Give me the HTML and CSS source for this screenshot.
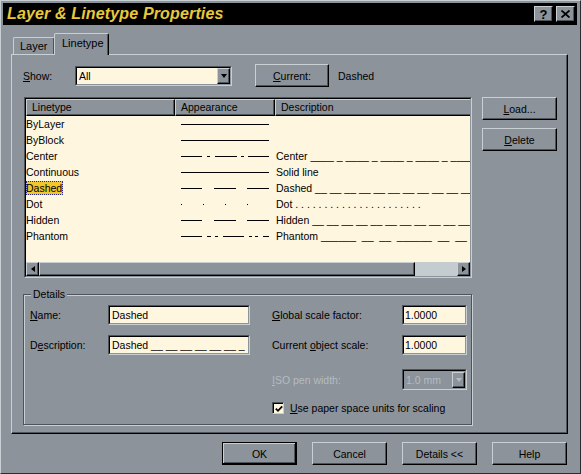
FILE: index.html
```html
<!DOCTYPE html>
<html>
<head>
<meta charset="utf-8">
<title>Layer &amp; Linetype Properties</title>
<link rel="stylesheet" href="styles.css">
</head>
<body>
<div class="window">
  <div class="titlebar">
    <span class="title">Layer &amp; Linetype Properties</span>
    <div class="tbtns">
      <span class="tbtn">?</span>
      <span class="tbtn"><svg width="9" height="8" viewBox="0 0 9 8"><path d="M0.5 0.5 L8.5 7.5 M8.5 0.5 L0.5 7.5" stroke="#000" stroke-width="1.8" fill="none"/></svg></span>
    </div>
  </div>

  <div class="tabs">
    <span class="tab">Layer</span>
    <span class="tab active">Linetype</span>
  </div>

  <div class="panel">
    <div class="showrow">
      <span class="show-lbl"><u>S</u>how:</span>
      <div class="sunken combo">
        <div class="sunken-in combo-in">
          <span class="combo-val">All</span>
          <span class="combo-btn"><i class="tri-down"></i></span>
        </div>
      </div>
      <button class="btn current"><u>C</u>urrent:</button>
      <span class="curval">Dashed</span>
    </div>

    <div class="listrow">
      <div class="sunken list">
        <div class="sunken-in list-in">
          <div class="lhead">
            <span class="hc c1">Linetype</span>
            <span class="hc c2">Appearance</span>
            <span class="hc c3">Description</span>
          </div>
          <div class="lbody">
            <div class="lrow"><span class="c1">ByLayer</span><span class="c2"><svg class="ln" width="88" height="16"><path d="M0 8.5H88"/></svg></span><span class="c3"></span></div>
            <div class="lrow"><span class="c1">ByBlock</span><span class="c2"><svg class="ln" width="88" height="16"><path d="M0 8.5H88"/></svg></span><span class="c3"></span></div>
            <div class="lrow"><span class="c1">Center</span><span class="c2"><svg class="ln" width="88" height="16"><path d="M0 8.5H21M26 8.5H29M34 8.5H56M60 8.5H63M67 8.5H88"/></svg></span><span class="c3">Center ____ _ ____ _ ____ _ ____ _ ____ _ ____</span></div>
            <div class="lrow"><span class="c1">Continuous</span><span class="c2"><svg class="ln" width="88" height="16"><path d="M0 8.5H88"/></svg></span><span class="c3">Solid line</span></div>
            <div class="lrow"><span class="c1"><span class="sel">Dashed</span></span><span class="c2"><svg class="ln" width="88" height="16"><path d="M0 8.5H21M33 8.5H55M66 8.5H88"/></svg></span><span class="c3">Dashed __ __ __ __ __ __ __ __ __ __ __ __ __ _</span></div>
            <div class="lrow"><span class="c1">Dot</span><span class="c2"><svg class="ln" width="88" height="16"><path d="M0 8.5H1M22 8.5H23M44 8.5H45M66 8.5H67"/></svg></span><span class="c3">Dot . . . . . . . . . . . . . . . . . . . . . .</span></div>
            <div class="lrow"><span class="c1">Hidden</span><span class="c2"><svg class="ln" width="88" height="16"><path d="M0 8.5H21M33 8.5H55M66 8.5H88"/></svg></span><span class="c3">Hidden __ __ __ __ __ __ __ __ __ __ __ __ __ __</span></div>
            <div class="lrow"><span class="c1">Phantom</span><span class="c2"><svg class="ln" width="88" height="16"><path d="M0 8.5H21M26 8.5H30M34 8.5H37M42 8.5H63M68 8.5H71M74 8.5H77M82 8.5H88"/></svg></span><span class="c3">Phantom ______  __  __  ______  __  __  ______</span></div>
          </div>
          <div class="hscroll">
            <span class="sbtn"><i class="tri-left"></i></span>
            <span class="sthumb"></span>
            <span class="strack"></span>
            <span class="sbtn"><i class="tri-right"></i></span>
          </div>
        </div>
      </div>
      <div class="sidebtns">
        <button class="btn"><u>L</u>oad...</button>
        <button class="btn"><u>D</u>elete</button>
      </div>
    </div>

    <div class="details">
      <span class="legend">Details</span>
      <div class="drow r1">
        <span class="dl1"><u>N</u>ame:</span>
        <div class="sunken field wide"><div class="sunken-in field-in">Dashed</div></div>
        <span class="dl2"><u>G</u>lobal scale factor:</span>
        <div class="sunken field narrow"><div class="sunken-in field-in">1.0000</div></div>
      </div>
      <div class="drow r2">
        <span class="dl1">D<u>e</u>scription:</span>
        <div class="sunken field wide"><div class="sunken-in field-in">Dashed __ __ __ __ __ __ _</div></div>
        <span class="dl2">Current <u>o</u>bject scale:</span>
        <div class="sunken field narrow"><div class="sunken-in field-in">1.0000</div></div>
      </div>
      <div class="drow r3">
        <span class="spacer"></span>
        <span class="dl2 disabled"><u>I</u>SO pen width:</span>
        <div class="sunken field narrow dis"><div class="sunken-in field-in dis-in"><span class="dis-val">1.0 mm</span><span class="combo-btn"><i class="tri-down grey"></i></span></div></div>
      </div>
      <div class="drow r4">
        <span class="spacer"></span>
        <span class="checkbox"><svg width="8" height="8" viewBox="0 0 8 8"><path d="M0.8 3.6 L3 5.8 L7.2 1.4" stroke="#000" stroke-width="1.8" fill="none"/></svg></span>
        <span class="cblabel"><u>U</u>se paper space units for scaling</span>
      </div>
    </div>
  </div>

  <div class="bottom">
    <button class="btn default">OK</button>
    <button class="btn">Cancel</button>
    <button class="btn">Details &lt;&lt;</button>
    <button class="btn">Help</button>
  </div>
</div>
</body>
</html>
```

FILE: styles.css
```css
* { box-sizing: border-box; }

body {
  margin: 0;
  background: #8c939a;
  font-family: "Liberation Sans", Arial, sans-serif;
  font-size: 10.5px;
  color: #000;
}

.window {
  width: 581px;
  height: 474px;
  border: 1px solid;
  border-color: #c8d0d4 #2a2e32 #2a2e32 #c8d0d4;
  padding: 2px 3px 0 2px;
  background: #8c939a;
}

/* title bar */
.titlebar {
  height: 22px;
  background: #000;
  display: flex;
  align-items: center;
  justify-content: space-between;
  padding-left: 4px;
}
.title {
  color: #e9c83a;
  font-family: "Liberation Sans", Arial, sans-serif;
  font-weight: bold;
  font-style: italic;
  font-size: 16px;
  letter-spacing: 0.15px;
}
.tbtns {
  display: flex;
  gap: 3px;
  margin-right: 2px;
}
.tbtn {
  width: 19px;
  height: 16px;
  background: #8c939a;
  border: 1px solid;
  border-color: #c8d0d4 #000 #000 #c8d0d4;
  box-shadow: inset -1px -1px 0 #4e5459;
  display: flex;
  align-items: center;
  justify-content: center;
  font-weight: bold;
  font-size: 13px;
  line-height: 1;
}

/* tabs */
.tabs {
  display: flex;
  align-items: flex-end;
  height: 29px;
  padding-left: 10px;
  position: relative;
  z-index: 1;
}
.tab {
  height: 17px;
  width: 42px;
  padding-left: 6px;
  padding-top: 2px;
  border: 1px solid;
  border-bottom: none;
  border-color: #c8d0d4 #000 #000 #c8d0d4;
  border-radius: 2px 2px 0 0;
  box-shadow: inset -1px 0 0 #4e5459;
  font-size: 11px;
}
.tab.active {
  width: 55px;
  height: 22px;
  margin-left: -1px;
  margin-bottom: -1px;
  padding-left: 7px;
  padding-top: 3px;
  background: #8c939a;
}

/* panel */
.panel {
  margin-left: 8px;
  width: 557px;
  height: 380px;
  border: 1px solid;
  border-color: #c8d0d4 #000 #000 #c8d0d4;
  box-shadow: inset -1px -1px 0 #4e5459;
}

.showrow {
  display: flex;
  align-items: center;
  height: 23px;
  margin-top: 9px;
  padding-left: 11px;
}
.show-lbl { width: 52px; }

.sunken {
  border: 1px solid;
  border-color: #4e5459 #c8d0d4 #c8d0d4 #4e5459;
}
.sunken-in {
  border: 1px solid;
  border-color: #000 #8c939a #8c939a #000;
  height: 100%;
  background: #fff6df;
}

.combo { width: 157px; height: 20px; }
.combo-in {
  display: flex;
  align-items: center;
  justify-content: space-between;
  padding-left: 2px;
}
.combo-btn {
  width: 13px;
  height: 16px;
  background: #8c939a;
  border: 1px solid;
  border-color: #c8d0d4 #000 #000 #c8d0d4;
  box-shadow: inset -1px -1px 0 #4e5459;
  display: flex;
  align-items: center;
  justify-content: center;
}
.tri-down {
  display: block;
  width: 0; height: 0;
  border-left: 3.5px solid transparent;
  border-right: 3.5px solid transparent;
  border-top: 4px solid #000;
}
.tri-down.grey { border-top-color: #b4bcc1; }
.tri-left {
  display: block;
  width: 0; height: 0;
  border-top: 3.5px solid transparent;
  border-bottom: 3.5px solid transparent;
  border-right: 4px solid #000;
}
.tri-right {
  display: block;
  width: 0; height: 0;
  border-top: 3.5px solid transparent;
  border-bottom: 3.5px solid transparent;
  border-left: 4px solid #000;
}

.btn {
  width: 75px;
  height: 23px;
  padding: 0;
  background: #8c939a;
  border: 1px solid;
  border-color: #c8d0d4 #000 #000 #c8d0d4;
  box-shadow: inset -1px -1px 0 #4e5459;
  font-family: inherit;
  font-size: 10.5px;
  color: #000;
}
.btn.current { width: 74px; margin-left: 23px; }
.btn.default {
  border-color: #000;
  box-shadow: inset -1px -1px 0 #000, inset 1px 1px 0 #c8d0d4, inset -2px -2px 0 #4e5459;
}
.curval { margin-left: 9px; }

/* list */
.listrow {
  display: flex;
  margin-top: 10px;
  padding-left: 12px;
}
.list { width: 448px; height: 181px; }
.list-in {
  display: flex;
  flex-direction: column;
  overflow: hidden;
}
.lhead {
  display: flex;
  height: 17px;
  flex: none;
}
.hc {
  height: 17px;
  background: #8c939a;
  border: 1px solid;
  border-color: #c8d0d4 #000 #000 #c8d0d4;
  box-shadow: inset -1px -1px 0 #4e5459;
  padding-left: 5px;
  line-height: 14px;
  white-space: nowrap;
}
.c1 { width: 149px; flex: none; }
.c2 { width: 100px; flex: none; }
.c3 { flex: 1; min-width: 0; }
.hc.c3 { width: 200px; flex: none; }

.lbody { flex: 1; }
.lrow {
  display: flex;
  height: 16px;
  align-items: center;
}
.lrow .c1 { padding-left: 0; }
.lrow .c2 { padding-left: 6px; height: 16px; }
.lrow .c3 {
  padding-left: 1px;
  white-space: pre;
  overflow: hidden;
}
.ln { display: block; }
.ln path { stroke: #000; stroke-width: 1; fill: none; }
.sel {
  background: #f2c72b;
  outline: 1px dotted #2a2a80;
  outline-offset: -1px;
  padding: 1px 1px 1px 0;
}

.hscroll {
  display: flex;
  height: 14px;
  flex: none;
}
.sbtn {
  width: 13px;
  height: 14px;
  background: #8c939a;
  border: 1px solid;
  border-color: #c8d0d4 #000 #000 #c8d0d4;
  box-shadow: inset -1px -1px 0 #4e5459;
  display: flex;
  align-items: center;
  justify-content: center;
}
.sthumb {
  width: 376px;
  height: 14px;
  background: #8c939a;
  border: 1px solid;
  border-color: #c8d0d4 #000 #000 #c8d0d4;
  box-shadow: inset -1px -1px 0 #4e5459;
}
.strack { flex: 1; background: #c4ccd0; }

.sidebtns {
  display: flex;
  flex-direction: column;
  gap: 8px;
  margin-left: 10px;
}

/* details group */
.details {
  position: relative;
  margin-top: 16px;
  margin-left: 11px;
  width: 449px;
  height: 131px;
  border: 1px solid #4e5459;
  box-shadow: 1px 1px 0 #c8d0d4, inset 1px 1px 0 #c8d0d4;
  padding: 10px 0 0 6px;
}
.legend {
  position: absolute;
  top: -7px;
  left: 7px;
  padding: 0 2px;
  background: #8c939a;
  line-height: 13px;
}
.drow {
  display: flex;
  align-items: center;
  height: 20px;
}
.r2 { margin-top: 10px; }
.r3 { margin-top: 14px; height: 21px; }
.r4 { margin-top: 12px; height: 12px; }
.dl1 { width: 78px; flex: none; }
.dl2 { width: 130px; flex: none; margin-left: 22px; }
.spacer { width: 220px; flex: none; }
.r4 .spacer { width: 242px; }
.field { height: 20px; flex: none; }
.field.wide { width: 142px; }
.field.narrow { width: 65px; }
.field-in {
  padding-left: 2px;
  line-height: 16px;
  white-space: pre;
  overflow: hidden;
}
.narrow .field-in { padding-left: 1px; }
.field.dis { height: 21px; }
.dis-in {
  background: #8c939a;
  display: flex;
  align-items: center;
  justify-content: space-between;
}
.disabled, .dis-val { color: #b4bcc1; }
.dis-val { padding-left: 1px; }

.checkbox {
  width: 12px;
  height: 12px;
  flex: none;
  border: 1px solid;
  border-color: #4e5459 #c8d0d4 #c8d0d4 #4e5459;
  box-shadow: inset 1px 1px 0 #000;
  background: #fff6df;
  display: flex;
  align-items: center;
  justify-content: center;
  padding: 1px 0 0 1px;
}
.checkbox svg { display: block; }
.cblabel { margin-left: 6px; }

/* bottom buttons */
.bottom {
  display: flex;
  justify-content: flex-end;
  gap: 15px;
  margin-top: 8px;
  padding-right: 10px;
}
```
